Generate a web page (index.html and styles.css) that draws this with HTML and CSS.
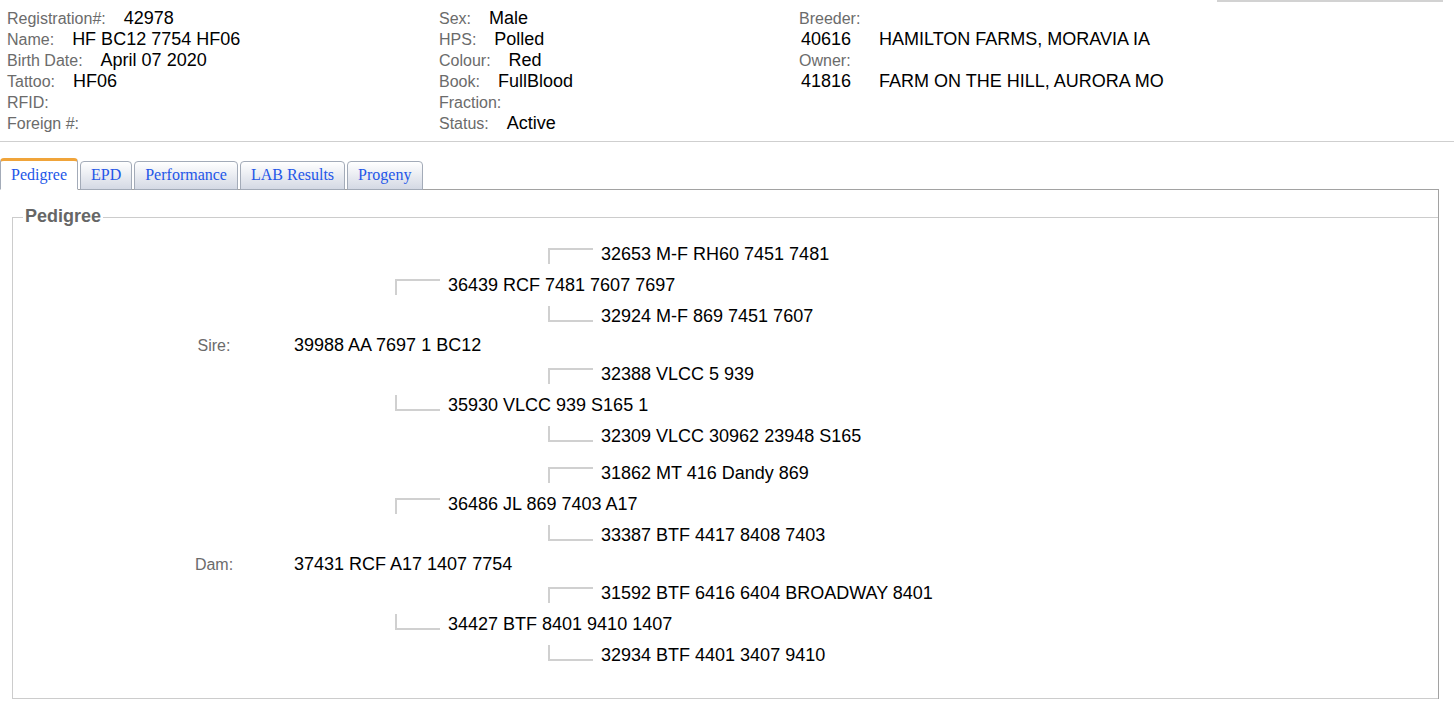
FILE: index.html
```html
<!DOCTYPE html>
<html lang="en">
<head>
    <meta charset="UTF-8">
    <meta name="viewport" content="width=device-width, initial-scale=1.0">
    <title>Animal details - HF BC12 7754 HF06</title>
    <link rel="stylesheet" href="styles.css">
</head>
<body>
<div class="top-edge"></div>
<div class="animal-header">
  <div class="info-col">
    <div class="info-row"><span class="lbl">Registration#:</span><span class="val">42978</span></div>
    <div class="info-row"><span class="lbl">Name:</span><span class="val">HF BC12 7754 HF06</span></div>
    <div class="info-row"><span class="lbl">Birth Date:</span><span class="val">April 07 2020</span></div>
    <div class="info-row"><span class="lbl">Tattoo:</span><span class="val">HF06</span></div>
    <div class="info-row"><span class="lbl">RFID:</span></div>
    <div class="info-row"><span class="lbl">Foreign #:</span></div>
  </div>
  <div class="info-col">
    <div class="info-row"><span class="lbl">Sex:</span><span class="val">Male</span></div>
    <div class="info-row"><span class="lbl">HPS:</span><span class="val">Polled</span></div>
    <div class="info-row"><span class="lbl">Colour:</span><span class="val">Red</span></div>
    <div class="info-row"><span class="lbl">Book:</span><span class="val">FullBlood</span></div>
    <div class="info-row"><span class="lbl">Fraction:</span></div>
    <div class="info-row"><span class="lbl">Status:</span><span class="val">Active</span></div>
  </div>
  <div class="info-col">
    <div class="info-row"><span class="lbl">Breeder:</span></div>
    <div class="info-row"><span class="val num">40616</span><span class="val">HAMILTON FARMS, MORAVIA IA</span></div>
    <div class="info-row"><span class="lbl">Owner:</span></div>
    <div class="info-row"><span class="val num">41816</span><span class="val">FARM ON THE HILL, AURORA MO</span></div>
  </div>
</div>

<ul class="tabs">
  <li class="tab active">Pedigree</li>
  <li class="tab">EPD</li>
  <li class="tab">Performance</li>
  <li class="tab">LAB Results</li>
  <li class="tab">Progeny</li>
</ul>
<div class="tab-panel">
  <fieldset class="pedigree">
    <legend>Pedigree</legend>
    <div class="ped-half">
      <div class="ped g3 r1"><span class="conn top"></span>32653 M-F RH60 7451 7481</div>
      <div class="ped g2 r2"><span class="conn top"></span>36439 RCF 7481 7607 7697</div>
      <div class="ped g3 r3"><span class="conn bottom"></span>32924 M-F 869 7451 7607</div>
      <div class="ped-lbl r4">Sire:</div>
      <div class="ped g1 r4">39988 AA 7697 1 BC12</div>
      <div class="ped g3 r5"><span class="conn top"></span>32388 VLCC 5 939</div>
      <div class="ped g2 r6"><span class="conn bottom"></span>35930 VLCC 939 S165 1</div>
      <div class="ped g3 r7"><span class="conn bottom"></span>32309 VLCC 30962 23948 S165</div>
    </div>
    <div class="ped-half">
      <div class="ped g3 r1"><span class="conn top"></span>31862 MT 416 Dandy 869</div>
      <div class="ped g2 r2"><span class="conn top"></span>36486 JL 869 7403 A17</div>
      <div class="ped g3 r3"><span class="conn bottom"></span>33387 BTF 4417 8408 7403</div>
      <div class="ped-lbl r4">Dam:</div>
      <div class="ped g1 r4">37431 RCF A17 1407 7754</div>
      <div class="ped g3 r5"><span class="conn top"></span>31592 BTF 6416 6404 BROADWAY 8401</div>
      <div class="ped g2 r6"><span class="conn bottom"></span>34427 BTF 8401 9410 1407</div>
      <div class="ped g3 r7"><span class="conn bottom"></span>32934 BTF 4401 3407 9410</div>
    </div>
  </fieldset>
</div>
</body>
</html>
```

FILE: styles.css
```css
body{
  margin:0;
  font-family:"Liberation Sans", Arial, sans-serif;
  color:#000;
  background:#fff;
  position:relative;
}

/* leftover edge of the box above, scrolled off */
.top-edge{
  position:absolute;
  top:0;
  right:11px;
  width:226px;
  border-top:2px solid #d2d2d2;
}

.animal-header{
  display:grid;
  grid-template-columns:432px 360px 1fr;
  padding:8px 0 7px 7px;
  border-bottom:1px solid #cfcfcf;
}
.info-row{
  display:flex;
  align-items:baseline;
  height:21px;
  line-height:21px;
  white-space:nowrap;
}
.lbl{
  font-size:16px;
  color:#6b6b6b;
  margin-right:18px;
}
.val{
  font-size:18px;
}
.num{
  width:80px;
  padding-left:2px;
  box-sizing:border-box;
}

.tabs{
  list-style:none;
  margin:16px 0 -1px 0;
  padding:0;
  display:flex;
  align-items:flex-end;
  gap:2px;
  position:relative;
  z-index:1;
}
.tab{
  font-family:"Liberation Serif", "Times New Roman", serif;
  font-size:16px;
  color:#2356e8;
  height:27px;
  line-height:26px;
  padding:0 10px;
  border:1px solid #a3abb8;
  border-radius:4px 4px 0 0;
  background:linear-gradient(to bottom, #ffffff, #d4d9e4);
  cursor:pointer;
}
.tab.active{
  background:#fff;
  height:28px;
  line-height:27px;
  border-top:3px solid #f0a43a;
  border-bottom-color:#fff;
  padding:0 10px;
}
.tab:last-child{
  padding-right:11px;
}

.tab-panel{
  border-top:1px solid #a2a2a2;
  border-right:1px solid #a2a2a2;
  margin-right:15px;
  padding-top:17px;
}
.pedigree{
  margin:0 0 0 12px;
  padding:12px 0 27px 0;
  border:1px solid #cccccc;
  border-right:none;
  min-width:0;
}
.pedigree legend{
  font-size:18px;
  line-height:18px;
  font-weight:bold;
  color:#666;
  padding:0 2px 2px 2px;
  margin-left:10px;
}

.ped-half{
  display:grid;
  grid-template-columns:80px 141px 153px 1fr;
  grid-template-rows:31px 31px 31px 27px 31px 31px 31px;
  margin-left:161px;
}
.ped-half + .ped-half{
  margin-top:6px;
}
.ped{
  display:flex;
  align-items:center;
  font-size:18px;
  white-space:nowrap;
}
.ped-lbl{
  grid-column:1;
  display:flex;
  align-items:center;
  justify-content:center;
  font-size:16px;
  color:#6b6b6b;
}
.g1{ grid-column:2 / span 2; padding-left:40px; }
.g2{ grid-column:3 / span 2; }
.g3{ grid-column:4; }
.r1{ grid-row:1; }
.r2{ grid-row:2; }
.r3{ grid-row:3; }
.r4{ grid-row:4; }
.r5{ grid-row:5; }
.r6{ grid-row:6; }
.r7{ grid-row:7; }

.conn{
  display:inline-block;
  width:43px;
  height:14px;
  border-left:2px solid #d0d0d0;
  margin-right:8px;
}
.conn.top{
  border-top:2px solid #d0d0d0;
  margin-top:2px;
}
.conn.bottom{
  border-bottom:2px solid #d0d0d0;
  margin-top:-5px;
}
```
